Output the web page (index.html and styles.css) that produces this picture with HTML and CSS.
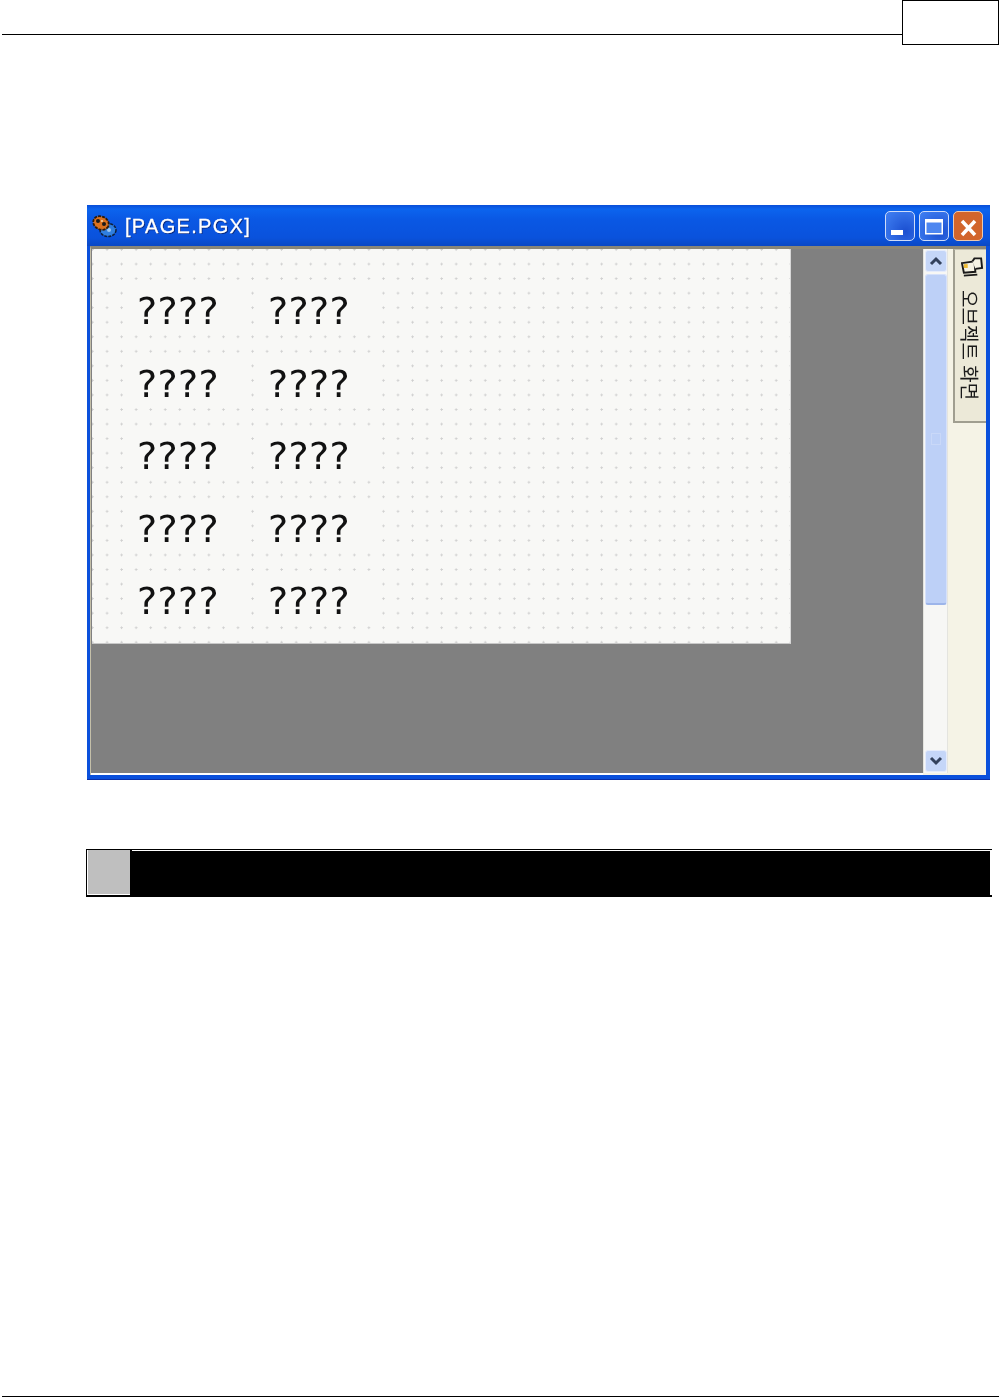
FILE: index.html
```html
<!DOCTYPE html>
<html lang="ko">
<head>
    <meta charset="UTF-8">
    <meta name="viewport" content="width=device-width, initial-scale=1.0">
    <title>PAGE.PGX</title>
    <link rel="stylesheet" href="styles.css">
</head>
<body>

    <div class="page-header">
        <div class="header-rule"></div>
        <div class="page-number"></div>
    </div>

    <div class="content">
        <div class="window">
            <div class="title-bar">
                <svg class="app-icon" width="25" height="24" viewBox="0 0 25 24">
                    <ellipse cx="16" cy="16" rx="8" ry="6.500" fill="#2f7fe0" stroke="#10203a" stroke-width="1.500" stroke-dasharray="3 1"/>
                    <circle cx="17" cy="16" r="2" fill="#9cc8f2"/>
                    <ellipse cx="9" cy="9" rx="8" ry="6.500" fill="#d9711f" stroke="#2e1a08" stroke-width="1.800" stroke-dasharray="3 1" transform="rotate(25 9 9)"/>
                    <circle cx="6" cy="7" r="2" fill="#1a1a1a"/>
                    <circle cx="12" cy="10" r="2" fill="#1a1a1a"/>
                    <circle cx="10" cy="7" r="1" fill="#f4d9a8"/>
                </svg>
                <span class="window-title">[PAGE.PGX]</span>
                <div class="window-buttons">
                    <div class="win-btn">
                        <svg width="30" height="30" viewBox="0 0 30 30"><rect x="6" y="19" width="12" height="5" fill="#fff"/></svg>
                    </div>
                    <div class="win-btn">
                        <svg width="30" height="30" viewBox="0 0 30 30"><rect x="6.750" y="8.750" width="16.500" height="14" fill="#4d86f0" stroke="#fff" stroke-width="1.500"/><rect x="6" y="8" width="18" height="3.500" fill="#fff"/></svg>
                    </div>
                    <div class="win-btn win-close">
                        <svg width="30" height="30" viewBox="0 0 30 30"><path d="M9 10 22 24M22 10 9 24" stroke="#fff" stroke-width="3.500" fill="none"/></svg>
                    </div>
                </div>
            </div>

            <div class="client">
                <div class="workspace">
                    <div class="sheet">
                        <div class="label">????</div>
                        <div class="label">????</div>
                        <div class="label">????</div>
                        <div class="label">????</div>
                        <div class="label">????</div>
                        <div class="label">????</div>
                        <div class="label">????</div>
                        <div class="label">????</div>
                        <div class="label">????</div>
                        <div class="label">????</div>
                    </div>
                </div>

                <div class="scrollbar">
                    <div class="scroll-btn">
                        <svg width="14" height="10" viewBox="0 0 14 10"><path d="M2 8 7 3 12 8" fill="none" stroke="#33415c" stroke-width="3"/></svg>
                    </div>
                    <div class="scroll-thumb"><span class="thumb-grip"></span></div>
                    <div class="scroll-track"></div>
                    <div class="scroll-btn">
                        <svg width="14" height="10" viewBox="0 0 14 10"><path d="M2 2 7 7 12 2" fill="none" stroke="#33415c" stroke-width="3"/></svg>
                    </div>
                </div>

                <div class="side-panel">
                    <div class="side-tab">
                        <svg class="tab-icon" width="23" height="20" viewBox="0 0 24 20">
                            <path d="M1 6 14 4 15 15 3 16Z" fill="#f6f3e4" stroke="#1a1a1a" stroke-width="2"/>
                            <path d="M12 4 14 1 21 1 22 11 15 12" fill="#f6f3e4" stroke="#1a1a1a" stroke-width="2"/>
                            <path d="M3 19 17 18" stroke="#1a1a1a" stroke-width="2"/>
                            <rect x="3" y="7" width="4" height="4" fill="#eebb33"/>
                        </svg>
                        <span class="side-text">오브젝트 화면</span>
                    </div>
                </div>
            </div>
        </div>

        <div class="black-bar">
            <div class="bar-cell"></div>
            <div class="bar-body"></div>
        </div>
    </div>

    <div class="page-footer"></div>

</body>
</html>
```

FILE: styles.css
```css
body {
    margin: 0;
    height: 1397px;
    display: flex;
    flex-direction: column;
    background-color: #ffffff;
    font-family: "Liberation Sans", "Noto Sans CJK KR", sans-serif;
    overflow: hidden;
}

.page-header {
    display: flex;
    align-items: flex-start;
    padding-left: 2px;
}

.header-rule {
    flex-grow: 1;
    height: 34px;
    border-bottom: 1px solid #000;
}

.page-number {
    width: 95px;
    height: 43px;
    border: 1px solid #000;
}

.content {
    padding: 160px 0 0 87px;
}

.window {
    width: 903px;
    height: 575px;
    display: flex;
    flex-direction: column;
    box-sizing: border-box;
    padding: 0 4px 4px 3px;
    background: #0a50dc;
    border-bottom: 1px solid #0a2fa8;
    filter: blur(0.5px);
}

.title-bar {
    height: 41px;
    margin: 0 -4px 0 -3px;
    padding: 6px 7px 0 5px;
    box-sizing: border-box;
    display: flex;
    align-items: flex-start;
    background: linear-gradient(#0a4ed8 0%, #0c64ee 10%, #0a58e4 35%, #0a52dc 80%, #0a48c4 100%);
}

.app-icon {
    margin-top: 3px;
    flex-shrink: 0;
}

.window-title {
    margin: 3px 0 0 8px;
    color: #fff;
    font-size: 20px;
    line-height: 24px;
    letter-spacing: 1.3px;
    -webkit-text-stroke: 0.3px #fff;
    text-shadow: 1px 1px 0 #0a2a80;
}

.window-buttons {
    margin-left: auto;
    display: flex;
    gap: 4px;
}

.win-btn {
    width: 30px;
    height: 30px;
    box-sizing: border-box;
    border: 1px solid #cfdcf8;
    border-radius: 5px;
    background: radial-gradient(circle at 70% 70%, #1b4fd0, #3d7cf0 90%);
}

.win-btn svg {
    display: block;
    margin: -1px;
}

.win-close {
    background: #d2652c;
    border-color: #ecc8ae;
}

.client {
    flex-grow: 1;
    display: flex;
    min-height: 0;
    background: #f5f3e6;
    border-top: 3px solid #8a8678;
    border-left: 1px solid #c4bfa8;
}

.workspace {
    width: 832px;
    height: 524px;
    background: #808080;
    border-bottom: 2px solid #fff;
}

.sheet {
    width: 699px;
    height: 395px;
    margin-left: 1px;
    box-sizing: border-box;
    padding: 36px 0 0 36px;
    display: grid;
    grid-template-columns: 122px 122px;
    grid-auto-rows: 45px;
    column-gap: 9px;
    row-gap: 27.5px;
    background-color: #f8f8f6;
    background-image: radial-gradient(circle at 1.5px 1.5px, #cfcfcf 0.9px, transparent 1.3px);
    background-size: 14.55px 14.55px;
    background-position: -1px -1px;
    border-right: 1px solid #d8d8d8;
    border-bottom: 1px solid #c8c8c8;
}

.label {
    padding: 4px 0 0 9px;
    box-sizing: border-box;
    background: #f8f8f6;
    color: #111;
    font-family: "DejaVu Sans", sans-serif;
    font-size: 38px;
    line-height: 45px;
    letter-spacing: 0.3px;
}

.scrollbar {
    width: 25px;
    height: 524px;
    box-sizing: border-box;
    padding: 1px 0 1px 1px;
    display: flex;
    flex-direction: column;
    background: #f7f7f5;
    border-left: 1px solid #e4e4df;
    border-right: 1px solid #e4e4df;
}

.scroll-btn {
    height: 22px;
    display: flex;
    align-items: center;
    justify-content: center;
    background: #c5d6f8;
    border: 1px solid #e6ecfb;
    border-radius: 3px;
    box-sizing: border-box;
}

.scroll-thumb {
    height: 331px;
    margin-top: 2px;
    display: flex;
    align-items: center;
    justify-content: center;
    background: #bdd0f7;
    border: 1px solid #d6e1fa;
    border-bottom: 2px solid #9db5ea;
    border-radius: 3px;
    box-sizing: border-box;
}

.thumb-grip {
    width: 10px;
    height: 12px;
    border: 1px solid #c9d8f8;
    box-sizing: border-box;
}

.scroll-track {
    flex-grow: 1;
}

.side-panel {
    flex-grow: 1;
    padding-left: 5px;
    background: #f5f3e6;
}

.side-tab {
    height: 174px;
    box-sizing: border-box;
    padding: 7px 0 0 6px;
    display: flex;
    flex-direction: column;
    background: #ece9d8;
    border-left: 2px solid #a09e90;
    border-bottom: 2px solid #a09e90;
    border-top: 1px solid #c4c1b0;
}

.tab-icon {
    flex-shrink: 0;
}

.side-text {
    align-self: flex-start;
    margin: 13px 0 0 -1px;
    writing-mode: vertical-rl;
    text-orientation: sideways;
    font-family: "Noto Sans CJK KR", sans-serif;
    font-size: 19px;
    line-height: 20px;
    color: #1a1a1a;
}

.black-bar {
    width: 906px;
    height: 48px;
    margin: 69px 0 0 -1px;
    box-sizing: border-box;
    padding: 1px 0 2px 1px;
    display: flex;
    background: #000;
}

.bar-cell {
    width: 42px;
    background: #bfbfbf;
    border-left: 1px solid #fff;
    border-bottom: 1px solid #fff;
}

.bar-body {
    flex-grow: 1;
    margin-left: 2px;
    border-top: 1px solid #fff;
    border-right: 2px solid #fff;
}

.page-footer {
    margin: auto 0 0 2px;
    border-bottom: 1px solid #000;
}
```
